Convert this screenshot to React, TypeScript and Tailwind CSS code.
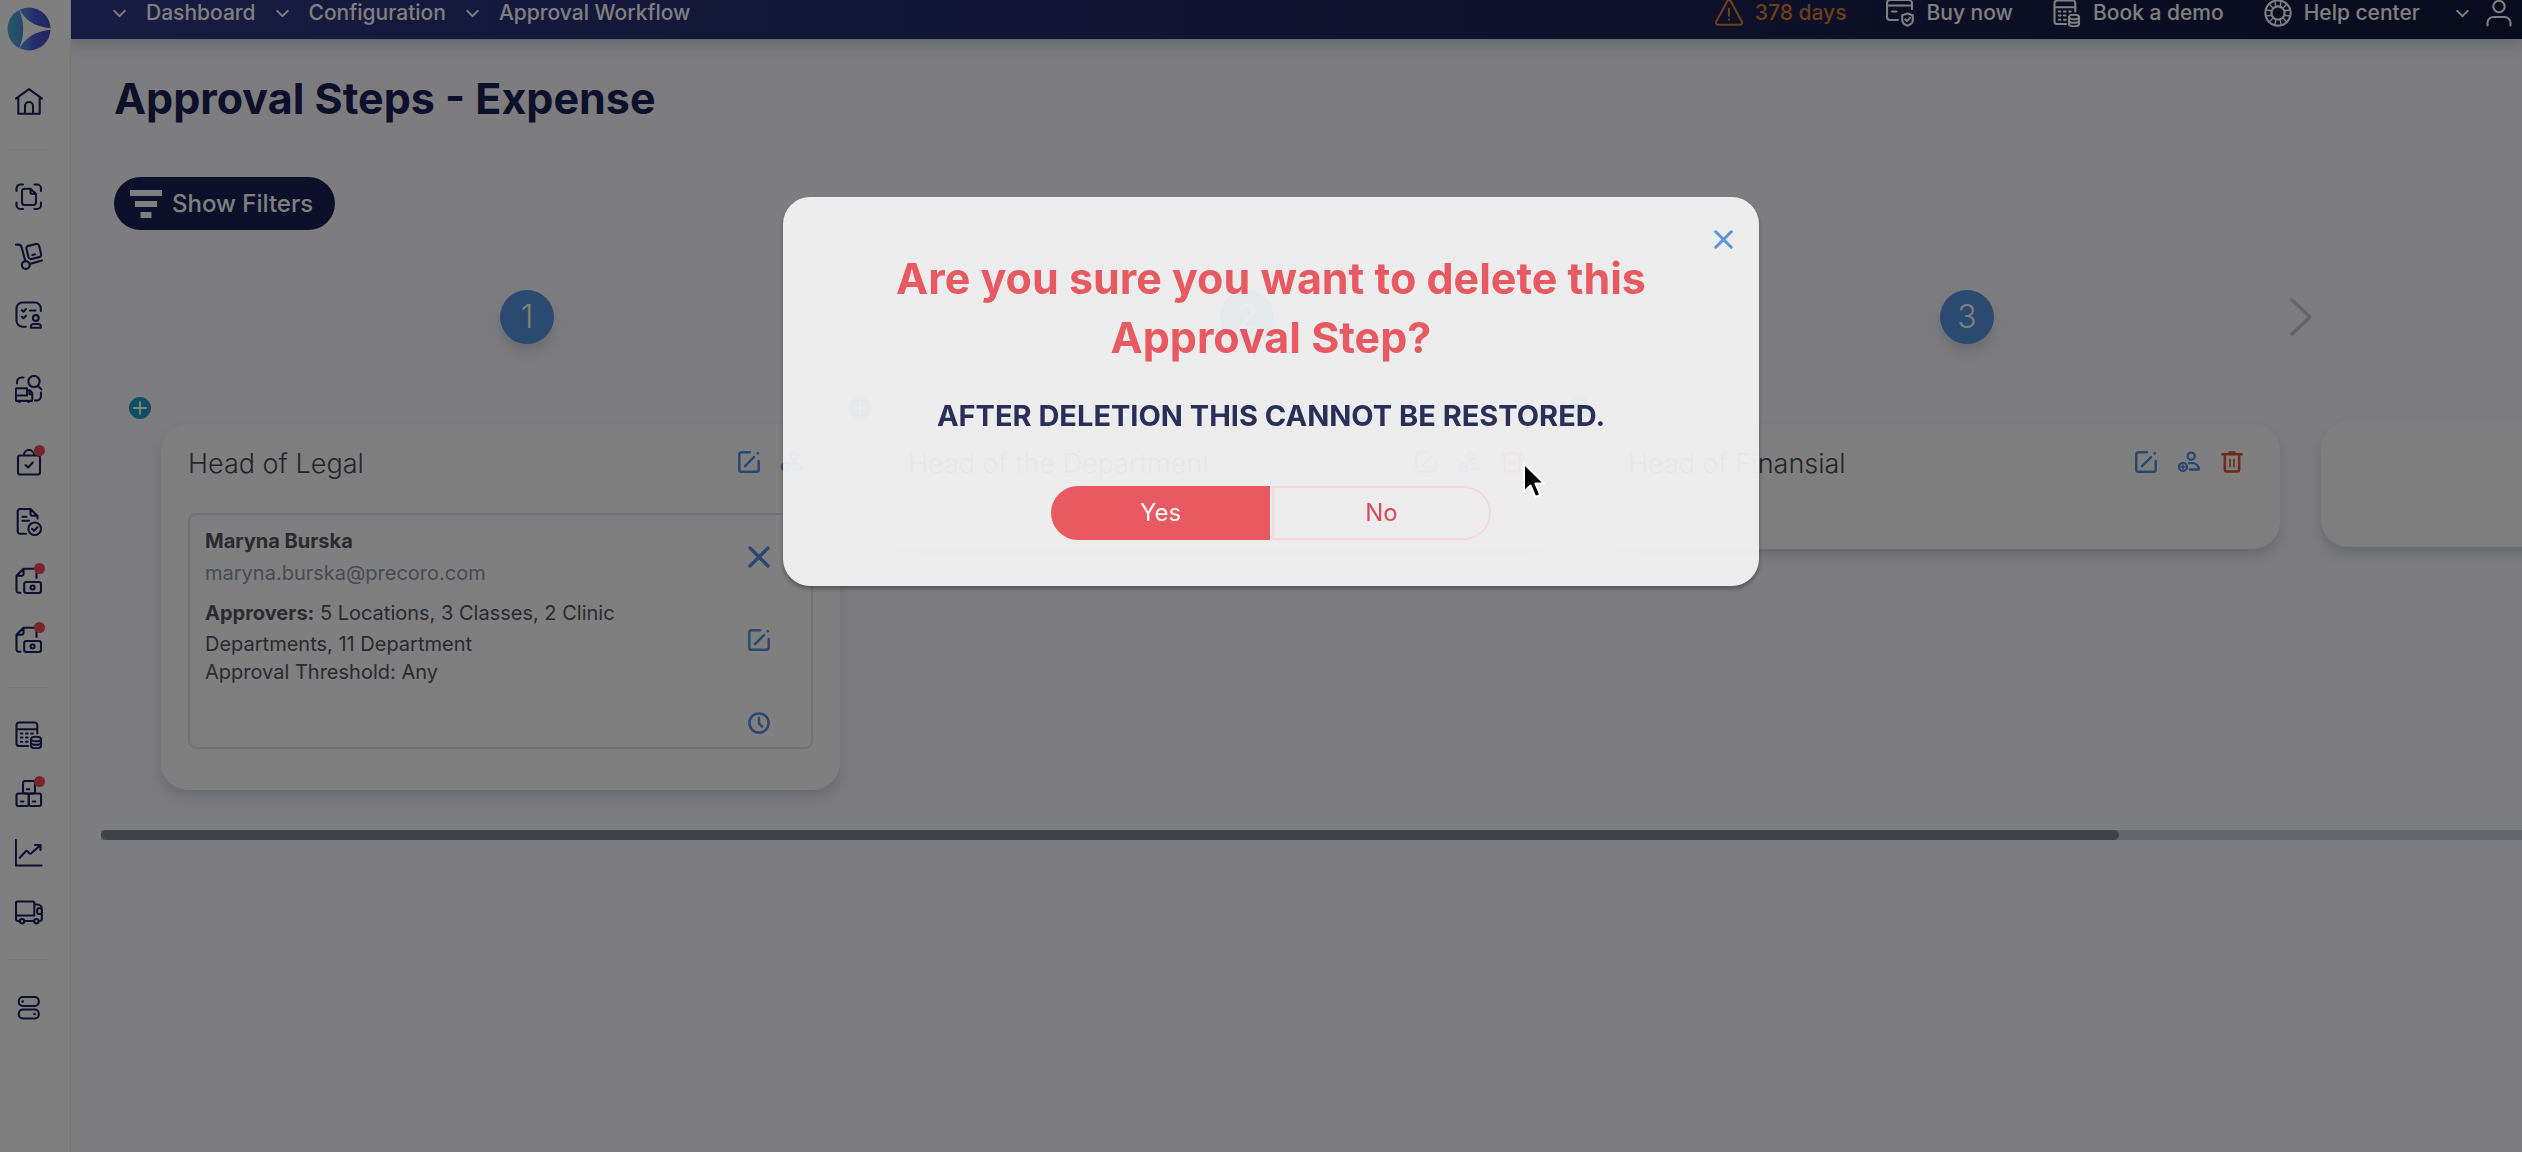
import React, { useState } from 'react';
import { ChevronDown } from 'lucide-react';

interface IconProps {
  className?: string;
}

interface Approver {
  name: string;
  email: string;
  scope: string;
  threshold: string;
}

interface Step {
  number: number;
  title: string;
  canDelete: boolean;
  approver?: Approver;
}

interface SidebarItem {
  name: string;
  icon: React.FC<IconProps>;
  alert?: boolean;
}

const strokeProps = {
  viewBox: '0 0 28 28',
  fill: 'none',
  stroke: 'currentColor',
  strokeWidth: 2.1,
  strokeLinecap: 'round' as const,
  strokeLinejoin: 'round' as const,
};

const HomeIcon: React.FC<IconProps> = ({ className }) => (
  <svg {...strokeProps} className={className}>
    <path d="M.9 10.6 14 1.2l13.1 9.4M3.3 9.4v16.4h21.4V9.4M10 25.5V18a4 4 0 0 1 8 0v7.5" />
  </svg>
);

const ScanIcon: React.FC<IconProps> = ({ className }) => (
  <svg {...strokeProps} className={className}>
    <path d="M1.5 8V5.5a4 4 0 0 1 4-4H8M19.5 1.5H22a4 4 0 0 1 4 4V8M26 19.5V22a4 4 0 0 1-4 4h-2.5M8 26H5.5a4 4 0 0 1-4-4v-2.5" />
    <path d="M15.5 5.8H9.5A2.5 2.5 0 0 0 7 8.3v11.2A2.5 2.5 0 0 0 9.5 22h9a2.5 2.5 0 0 0 2.5-2.5V11zM15.5 5.8V9a2 2 0 0 0 2 2H21" />
  </svg>
);

const CartIcon: React.FC<IconProps> = ({ className }) => (
  <svg {...strokeProps} className={className}>
    <path d="M.9 2.6h2.6c1.5 0 2.6.8 3 2.3l3.9 14.3M14.7 22 27 18.5" />
    <circle cx="10.8" cy="23" r="3.9" />
    <rect x="12.3" y="2.8" width="13" height="13.4" rx="2.5" transform="rotate(-13 18.8 9.5)" />
    <path d="m17.3 13 2.8-.7" />
  </svg>
);

const ChecklistIcon: React.FC<IconProps> = ({ className }) => (
  <svg {...strokeProps} className={className}>
    <path d="M25.8 10V7.5a6 6 0 0 0-6-6H7.5a6 6 0 0 0-6 6v12.3a6 6 0 0 0 6 6h3.3" />
    <path d="m6.8 9.200 1.600 1.500 2.600-2.600M6.800 15.800l1.600 1.500 2.600-2.600M15 9.500h5.500" />
    <circle cx="20.8" cy="17" r="2.9" />
    <path d="M16 26.800v-1.300a2.500 2.500 0 0 1 2.500-2.500h4.800a2.500 2.500 0 0 1 2.500 2.500v1.300z" />
  </svg>
);

const TruckSearchIcon: React.FC<IconProps> = ({ className }) => (
  <svg {...strokeProps} className={className}>
    <path d="M2 8.500V7a4.500 4.500 0 0 1 4.500-4.500h2M26 17.500V21a4.500 4.500 0 0 1-4.500 4.500H20" />
    <circle cx="19" cy="6.5" r="5.6" />
    <path d="m23 11 3.500 3.500M12 13.200H2a1.200 1.200 0 0 0-1.200 1.200v10.300a1.200 1.200 0 0 0 1.200 1.200h13.800a1.500 1.500 0 0 0 1.500-1.500v-5.200a4 4 0 0 0-4-4H12zM.8 20.500H12v-5.300M17 19.300h-2.500v-3.500" />
    <path d="M4.500 26.300v1M13.500 26.300v1" />
  </svg>
);

const BagIcon: React.FC<IconProps> = ({ className }) => (
  <svg {...strokeProps} className={className}>
    <rect x="3" y="6.5" width="22" height="19" rx="2" />
    <path d="M9 6a5 5 0 0 1 10 0M10.500 16l2.500 2.500 4.800-5" />
  </svg>
);

const DocCheckIcon: React.FC<IconProps> = ({ className }) => (
  <svg {...strokeProps} className={className}>
    <path d="M11 25.800H5a2.300 2.300 0 0 1-2.300-2.300V3.300A2.300 2.300 0 0 1 5 1h10.500l7 7v2.500M15.500 1v4.800a2 2 0 0 0 2 2h5M7.500 8.700h4M7.500 12.800h6.500" />
    <circle cx="19.7" cy="20.8" r="6.3" />
    <path d="m17 20.800 2 2 3.500-3.600" />
  </svg>
);

const InvoiceIcon: React.FC<IconProps> = ({ className }) => (
  <svg {...strokeProps} className={className}>
    <path d="M21.500 11V4A2.300 2.300 0 0 0 19.200 1.700H8.500l-7 7v14.800a2.300 2.300 0 0 0 2.300 2.300H5.500M8.500 1.700v5a2 2 0 0 1-2 2h-5" />
    <rect x="9.2" y="15" width="16.8" height="11" rx="2.2" />
    <circle cx="17.6" cy="20.5" r="2" />
  </svg>
);

const CalcCoinsIcon: React.FC<IconProps> = ({ className }) => (
  <svg {...strokeProps} className={className}>
    <path d="M22.300 12.500V4A2.500 2.500 0 0 0 19.800 1.500H4A2.500 2.500 0 0 0 1.500 4v18.500A2.500 2.500 0 0 0 4 25h9M1.500 8.200h20.800" />
    <path d="M5.800 12.500h1.600M11 12.500h1.600M16.200 12.500h1.600M5.800 16.500h1.600M11 16.500h1.600M5.800 20.700h1.600M11 20.700h1.600" />
    <ellipse cx="21" cy="18" rx="5" ry="2.3" />
    <path d="M16 18v7c0 1.300 2.200 2.300 5 2.300s5-1 5-2.300v-7M16 21.500c0 1.300 2.200 2.300 5 2.300s5-1 5-2.300" />
  </svg>
);

const BoxesIcon: React.FC<IconProps> = ({ className }) => (
  <svg {...strokeProps} className={className}>
    <rect x="8" y="1" width="12" height="12.5" rx="2" />
    <rect x="1.5" y="13.5" width="12.3" height="12.5" rx="2" />
    <rect x="13.8" y="13.5" width="12.3" height="12.5" rx="2" />
    <path d="M11.800 9.300h2.500M6 21.500h2.500M17.800 21.500h2.500" />
  </svg>
);

const ChartIcon: React.FC<IconProps> = ({ className }) => (
  <svg {...strokeProps} className={className}>
    <path d="M.9 1v25.500h25.600M4.800 18.800l5.700-6.300c.7-.8 1.500-.8 2.200 0l1.300 1.500c.8.800 1.700.8 2.500 0L25 6.500M20 6h5.500v5" />
  </svg>
);

const TruckIcon: React.FC<IconProps> = ({ className }) => (
  <svg {...strokeProps} className={className}>
    <path d="M4.500 23H3a2 2 0 0 1-2-2V5a1.500 1.500 0 0 1 1.500-1.500h15.300A1.500 1.500 0 0 1 19.300 5v12.500H1M19.300 6.500h3a4.500 4.500 0 0 1 4.500 4.500v10a2 2 0 0 1-2 2h-.8M19 23H9.500M26.500 16h-3a1.200 1.200 0 0 1-1.200-1.200v-3.300a1.200 1.200 0 0 1 1.200-1.200h3" />
    <circle cx="7" cy="23.2" r="2.2" />
    <circle cx="21.3" cy="23.2" r="2.2" />
  </svg>
);

const TogglesIcon: React.FC<IconProps> = ({ className }) => (
  <svg {...strokeProps} className={className}>
    <rect x="3.8" y="4" width="20" height="9" rx="4" />
    <rect x="3.8" y="16.5" width="20" height="9" rx="4" />
    <path d="M7.700 8.500h.1M19.500 21h.1" strokeWidth="2.6" />
  </svg>
);

const WarningIcon: React.FC<IconProps> = ({ className }) => (
  <svg {...strokeProps} className={className}>
    <path d="M12.200 2.300 1.300 22.500A2.200 2.200 0 0 0 3.200 25.800h21.600a2.200 2.200 0 0 0 1.900-3.300L15.800 2.300a2.100 2.100 0 0 0-3.600 0zM14 9.800v7M14 20.500v.2" />
  </svg>
);

const CardShieldIcon: React.FC<IconProps> = ({ className }) => (
  <svg {...strokeProps} className={className}>
    <path d="M26 10V4a3 3 0 0 0-3-3H4a3 3 0 0 0-3 3v14a3 3 0 0 0 3 3h8M1 6.500h25M6 12.500h4.500" />
    <path d="m21.500 14.500 5.300 1.700v4.500c0 3-2.300 5-5.300 6-3-1-5.300-3-5.300-6v-4.500zM19.300 20.500l1.700 1.600 3-3.200" />
  </svg>
);

const LifebuoyIcon: React.FC<IconProps> = ({ className }) => (
  <svg {...strokeProps} className={className}>
    <circle cx="14" cy="14" r="12.6" />
    <circle cx="14" cy="14" r="6.6" />
    <path d="M11 1.800 11.800 7.800M17 1.800l-.8 6M11 26.200l.8-6M17 26.200l-.8-6M1.800 11l6 .8M1.800 17l6-.8M26.200 11l-6 .8M26.200 17l-6-.8M5 5l4.300 4.300M23 5l-4.300 4.300M5 23l4.300-4.300M23 23l-4.300-4.300" strokeWidth="1.4" />
  </svg>
);

const UserIcon: React.FC<IconProps> = ({ className }) => (
  <svg {...strokeProps} className={className}>
    <circle cx="14" cy="7.5" r="5.7" />
    <path d="M2.500 26.500V24a6 6 0 0 1 6-6h11a6 6 0 0 1 6 6v2.500" />
  </svg>
);

const EditIcon: React.FC<IconProps> = ({ className }) => (
  <svg viewBox="0 0 22 22" fill="none" stroke="currentColor" strokeWidth="2.5" strokeLinecap="round" className={className}>
    <path d="M12 1.300H3.300a2 2 0 0 0-2 2v15.400a2 2 0 0 0 2 2h15.400a2 2 0 0 0 2-2V10M7 15.200 16 6.200M19.700 2.400l.2-.2" />
  </svg>
);

const AddUserIcon: React.FC<IconProps> = ({ className }) => (
  <svg viewBox="0 0 22 22" fill="none" stroke="currentColor" strokeWidth="2.3" strokeLinecap="round" strokeLinejoin="round" className={className}>
    <circle cx="13.2" cy="5.2" r="3.6" />
    <path d="M11.200 12.200h4a6 6 0 0 1 5.600 6.300H12" />
    <circle cx="5" cy="15.9" r="4" />
    <path d="M5 14v3.800M3.100 15.900h3.800" strokeWidth="1.6" />
  </svg>
);

const TrashIcon: React.FC<IconProps> = ({ className }) => (
  <svg viewBox="0 0 22 22" fill="none" stroke="currentColor" strokeWidth="2.5" strokeLinecap="round" strokeLinejoin="round" className={className}>
    <path d="M1.300 3.200h19.400M8.500 1.500h5M3.800 4v14.500a2 2 0 0 0 2 2h10.400a2 2 0 0 0 2-2V4" />
    <path d="M9 8.500v7M13 8.500v7" strokeWidth="1.7" />
  </svg>
);

const CrossIcon: React.FC<IconProps> = ({ className }) => (
  <svg viewBox="0 0 22 22" fill="none" stroke="currentColor" strokeWidth="3.4" strokeLinecap="round" className={className}>
    <path d="m2 2 18 18M20 2 2 20" />
  </svg>
);

const ClockIcon: React.FC<IconProps> = ({ className }) => (
  <svg viewBox="0 0 22 22" fill="none" stroke="currentColor" strokeWidth="2.5" strokeLinecap="round" strokeLinejoin="round" className={className}>
    <circle cx="11" cy="11" r="9.6" />
    <path d="M11 6v5.500l3 3" />
  </svg>
);

const Logo: React.FC<IconProps> = ({ className }) => (
  <svg viewBox="0 0 44 44" className={className}>
    <defs>
      <clipPath id="logo-disc">
        <circle cx="22" cy="22" r="21.5" />
      </clipPath>
      <linearGradient id="logo-fill">
        <stop offset="0" stopColor="#4fb0d2" />
        <stop offset="0.45" stopColor="#4f86dc" />
        <stop offset="0.6" stopColor="#4a5ae0" />
        <stop offset="1" stopColor="#444fc4" />
      </linearGradient>
    </defs>
    <g clipPath="url(#logo-disc)">
      <rect width="44" height="44" fill="url(#logo-fill)" />
      <path d="M11 0C17 12 27 20 44 21.200v1.600C27 24 17 32 11 44c7-16 7-28 0-44z" fill="#fff" />
    </g>
  </svg>
);

const sidebarGroups: SidebarItem[][][] = [
  [[{ name: 'Home', icon: HomeIcon }]],
  [
    [
      { name: 'Requests', icon: ScanIcon },
      { name: 'Purchase orders', icon: CartIcon },
      { name: 'Requests for proposal', icon: ChecklistIcon },
    ],
    [{ name: 'Supplier search', icon: TruckSearchIcon }],
    [
      { name: 'Receipts', icon: BagIcon, alert: true },
      { name: 'Approved documents', icon: DocCheckIcon },
      { name: 'Invoices', icon: InvoiceIcon, alert: true },
      { name: 'Expenses', icon: InvoiceIcon, alert: true },
    ],
  ],
  [
    [
      { name: 'Budgets', icon: CalcCoinsIcon },
      { name: 'Inventory', icon: BoxesIcon, alert: true },
      { name: 'Reports', icon: ChartIcon },
      { name: 'Suppliers', icon: TruckIcon },
    ],
  ],
  [[{ name: 'Configuration', icon: TogglesIcon }]],
];

const breadcrumbs = ['Dashboard', 'Configuration', 'Approval Workflow'];

const headerLinks = [
  { name: '378 days', icon: WarningIcon, color: 'text-[#dc7d2e]' },
  { name: 'Buy now', icon: CardShieldIcon, color: 'text-white' },
  { name: 'Book a demo', icon: CalcCoinsIcon, color: 'text-white' },
  { name: 'Help center', icon: LifebuoyIcon, color: 'text-white' },
];

const steps: Step[] = [
  {
    number: 1,
    title: 'Head of Legal',
    canDelete: false,
    approver: {
      name: 'Maryna Burska',
      email: 'maryna.burska@precoro.com',
      scope: '5 Locations, 3 Classes, 2 Clinic Departments, 11 Department',
      threshold: 'Any',
    },
  },
  { number: 2, title: 'Head of the Department', canDelete: true },
  { number: 3, title: 'Head of Finansial', canDelete: true },
];

const Sidebar: React.FC = () => (
  <aside className="w-[71px] shrink-0 border-r border-[#eeedf4] bg-white pt-[7px] pl-[15px] text-[#1a2060]">
    <a href="#home" aria-label="Precoro" className="-ml-2 block w-11">
      <Logo className="size-11" />
    </a>
    <nav className="mt-[37px]">
      {sidebarGroups.map((section, i) => (
        <div key={i}>
          {i > 0 && <hr className="-ml-2 my-[33px] w-[42px] border-[#efefef]" />}
          <div className="flex flex-col gap-[46px]">
            {section.map((group, j) => (
              <ul key={j} className="flex flex-col gap-[31px]">
                {group.map((item) => (
                  <li key={item.name}>
                    <a href="#section" aria-label={item.name} className="relative block size-7">
                      <item.icon className="size-7" />
                      {item.alert && (
                        <span className="absolute -top-1 -right-0.5 size-[11px] rounded-full bg-[#f04a60]" />
                      )}
                    </a>
                  </li>
                ))}
              </ul>
            ))}
          </div>
        </div>
      ))}
    </nav>
  </aside>
);

const Header: React.FC = () => (
  <header className="flex h-[39px] items-center justify-between bg-linear-to-r from-[#2f3985] to-[#12183c] pr-[9px] pb-[13px] pl-[42px] text-[21px] leading-[26px] font-medium whitespace-nowrap text-white shadow-[0_6px_12px_rgba(70,90,110,0.25)]">
    <nav className="flex items-center gap-5">
      {breadcrumbs.map((name) => (
        <React.Fragment key={name}>
          <ChevronDown className="-mx-1 size-[21px]" strokeWidth={2.4} />
          <a href="#crumb">{name}</a>
        </React.Fragment>
      ))}
    </nav>
    <div className="flex items-center">
      <div className="flex items-center gap-10">
        {headerLinks.map((link) => (
          <a key={link.name} href="#link" className={`flex items-center gap-3 ${link.color}`}>
            <link.icon className="size-7" />
            {link.name}
          </a>
        ))}
      </div>
      <button type="button" aria-label="Account" className="ml-8 flex items-center gap-3">
        <ChevronDown className="size-[21px]" strokeWidth={2.4} />
        <UserIcon className="size-7" />
      </button>
    </div>
  </header>
);

const ApproverBox: React.FC<{ approver: Approver }> = ({ approver }) => (
  <div className="mt-[31px] flex h-[236px] rounded-lg border-2 border-[#e4e3ee] pr-[41px] pl-[15px]">
    <div className="flex-1 pt-2.5 pr-10 text-xl text-[#565562]">
      <p className="leading-8 font-bold">{approver.name}</p>
      <p className="leading-8 text-[#8f96a6]">{approver.email}</p>
      <p className="mt-[9px] leading-[31px]">
        <b>Approvers:</b> {approver.scope}
      </p>
      <p className="leading-6">Approval Threshold: {approver.threshold}</p>
    </div>
    <div className="flex flex-col gap-[61px] pt-[31px] text-[#5490e6]">
      <button type="button" aria-label="Remove approver">
        <CrossIcon className="size-[22px]" />
      </button>
      <button type="button" aria-label="Edit approver">
        <EditIcon className="size-[22px]" />
      </button>
      <button type="button" aria-label="Approval deadline">
        <ClockIcon className="size-[22px]" />
      </button>
    </div>
  </div>
);

const StepColumn: React.FC<{ step: Step; onDelete: () => void }> = ({ step, onDelete }) => (
  <section className="w-[720px] shrink-0">
    <div className="flex justify-center pl-[76px]">
      <span className="flex size-[54px] items-center justify-center rounded-full bg-[#5494e4] text-[32px] font-light text-white shadow-[0_8px_14px_-2px_rgba(70,90,110,0.25)]">
        {step.number}
      </span>
    </div>
    <button type="button" aria-label="Add step" className="mt-[53px] block">
      <svg viewBox="0 0 22 22" className="size-[22px]">
        <circle cx="11" cy="11" r="11" fill="#1d9fc4" />
        <path d="M11 5v12M5 11h12" stroke="#fff" strokeWidth="2" strokeLinecap="round" />
      </svg>
    </button>
    <div className="mt-[5px] mr-[9px] ml-8 min-h-[125px] rounded-[27px] bg-white px-[27px] pt-[22px] shadow-[0_8px_14px_-2px_rgba(70,90,110,0.25)]">
      <div className="flex items-center justify-between pr-2.5">
        <h2 className="text-[27px] leading-9 font-light text-[#4a4955]">{step.title}</h2>
        <div className="flex gap-[21px] pb-1 text-[#5490e6]">
          <button type="button" aria-label="Edit step">
            <EditIcon className="size-[22px]" />
          </button>
          <button type="button" aria-label="Add approver">
            <AddUserIcon className="size-[22px]" />
          </button>
          {step.canDelete && (
            <button type="button" aria-label="Delete step" onClick={onDelete} className="text-[#e0553f]">
              <TrashIcon className="size-[22px]" />
            </button>
          )}
        </div>
      </div>
      {step.approver && (
        <div className="pb-[41px]">
          <ApproverBox approver={step.approver} />
        </div>
      )}
    </div>
  </section>
);

const DeleteModal: React.FC<{ onClose: () => void }> = ({ onClose }) => (
  <div className="fixed inset-0 flex items-start justify-center bg-black/50 pt-[197px] pl-5">
    <div
      role="dialog"
      aria-modal="true"
      aria-labelledby="delete-title"
      className="relative w-[976px] rounded-[27px] bg-[#f3f3f3] px-20 pt-[52px] pb-[46px] text-center opacity-94 shadow-[0_3px_4px_rgba(0,0,0,0.35)]"
    >
      <button
        type="button"
        aria-label="Close"
        onClick={onClose}
        className="absolute top-[33px] right-[26px] text-[#5795de]"
      >
        <CrossIcon className="size-[19px]" />
      </button>
      <h2 id="delete-title" className="text-[43px] leading-[59px] font-bold text-[#ee575f]">
        Are you sure you want to delete this
        <br />
        Approval Step?
      </h2>
      <p className="mt-[31px] text-[29px] leading-[36px] font-bold text-[#222a57]">
        AFTER DELETION THIS CANNOT BE RESTORED.
      </p>
      <div className="mt-[52px] flex justify-center gap-0.5 text-2xl">
        <button type="button" className="h-[54px] w-[219px] rounded-l-full bg-[#ee575f] text-white">
          Yes
        </button>
        <button
          type="button"
          onClick={onClose}
          className="h-[54px] w-[219px] rounded-r-full border-2 border-[#fddde2] text-[#e1465c]"
        >
          No
        </button>
      </div>
    </div>
    {/* Pointer */}
    <svg viewBox="0 0 24 38" className="absolute top-[461px] left-[1522px] h-[38px] w-6">
      <path
        d="M2 2.500v28l6.500-6 4.800 11.500 5-2.200-4.800-11.300h8.700z"
        fill="#000"
        stroke="#fff"
        strokeWidth="2"
        strokeLinejoin="round"
      />
    </svg>
  </div>
);

export default function App() {
  const [isDeleting, setIsDeleting] = useState(true);

  return (
    <div className="flex min-h-screen bg-[#faf8ff] font-['Inter',sans-serif]">
      <Sidebar />
      <div className="min-w-0 flex-1 overflow-hidden">
        <Header />
        <main className="pt-[33px]">
          <div className="pl-[43px]">
            <h1 className="text-[43px] leading-[52px] font-bold text-[#1b2154]">Approval Steps - Expense</h1>
            <button
              type="button"
              className="mt-[53px] flex h-[53px] items-center gap-2.5 rounded-full bg-[#1b2154] pr-[22px] pl-4 text-2xl font-medium text-white"
            >
              <svg viewBox="0 0 32 28" fill="currentColor" className="h-7 w-8">
                <path d="M0 0h32v6H0zM5 11h22v6H5zM10.500 22h11v6h-11z" />
              </svg>
              Show Filters
            </button>
          </div>

          <div className="mt-[60px] ml-[30px]">
            <div className="flex items-start overflow-hidden pb-10 pl-7">
              {steps.map((step) => (
                <StepColumn key={step.number} step={step} onDelete={() => setIsDeleting(true)} />
              ))}
              <section className="w-[720px] shrink-0">
                <div className="flex h-[54px] items-center">
                  <svg viewBox="0 0 24 40" fill="none" stroke="#cbcad3" strokeWidth="3.4" strokeLinecap="round" strokeLinejoin="round" className="h-10 w-6">
                    <path d="m3 3 18 17L3 37" />
                  </svg>
                </div>
                <div className="mt-[78px] mr-[9px] ml-8 h-[125px] rounded-[27px] bg-white shadow-[0_8px_14px_-2px_rgba(70,90,110,0.25)]" />
              </section>
            </div>
            {/* Horizontal scrollbar */}
            <div className="h-2.5 bg-[#c6cbd8]">
              <div className="h-2.5 w-5/6 rounded-full bg-[#818894]" />
            </div>
          </div>
        </main>
      </div>
      {isDeleting && <DeleteModal onClose={() => setIsDeleting(false)} />}
    </div>
  );
}
